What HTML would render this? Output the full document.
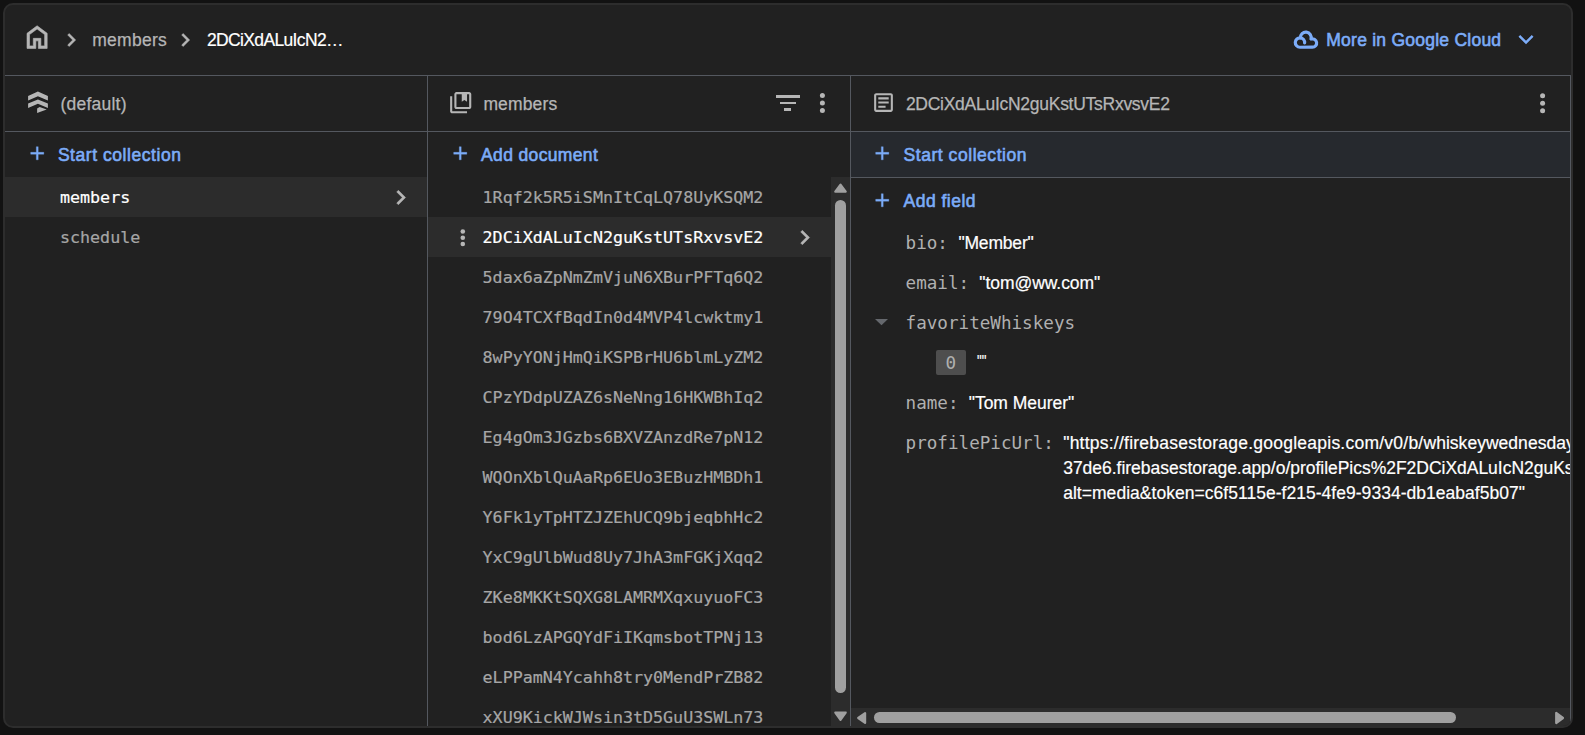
<!DOCTYPE html>
<html lang="en">
<head>
<meta charset="utf-8">
<title>Cloud Firestore</title>
<style>
*{box-sizing:border-box;margin:0;padding:0}
html,body{width:1585px;height:735px;overflow:hidden;background:#121212}
body{font-family:"Liberation Sans",sans-serif;color:#fff;position:relative}
.card{position:absolute;left:3px;top:3px;width:1570px;height:725px;background:#212121;border:2px solid #2d2d2d;border-radius:10px;overflow:hidden}
.wrap{position:absolute;left:-5px;top:-5px;width:1585px;height:735px}
.abs{position:absolute}
.hl{position:absolute;height:1px;background:#54585f}
.vl{position:absolute;width:1px;background:#54585f}
.t{position:absolute;white-space:nowrap;line-height:20px;font-size:17.5px}
.mono{font-family:"DejaVu Sans Mono","Liberation Mono",monospace;font-size:16.7px;letter-spacing:-0.02px}
.fld{font-family:"DejaVu Sans Mono","Liberation Mono",monospace;font-size:17.6px;color:#b0b0b0}
.hdr{color:#b6b6b6;-webkit-text-stroke:0.25px #b6b6b6}
.act{color:#7cacf8;-webkit-text-stroke:0.6px #7cacf8}
.doc{color:#a6a6a6;left:482.6px;-webkit-text-stroke:0.2px #a6a6a6}
.val{color:#fff;-webkit-text-stroke:0.2px #fff}
svg{position:absolute;overflow:visible}
</style>
</head>
<body>
<div class="card">
<div class="wrap">
<div class="hl" style="left:5px;top:75px;width:1566px"></div>
<div class="hl" style="left:5px;top:131px;width:1566px"></div>
<div class="vl" style="left:427px;top:76px;height:652px"></div>
<div class="vl" style="left:850px;top:76px;height:652px"></div>
<div class="vl" style="left:1570px;top:76px;height:652px"></div>
<svg style="left:22.45px;top:21.85px" width="30.2" height="30.2" viewBox="0 -960 960 960"><path fill="#b6b6b6" stroke="#b6b6b6" stroke-width="20" stroke-linejoin="miter" d="M240-200h120v-240h240v240h120v-360L480-740 240-560v360Zm-80 80v-480l320-240 320 240v480H520v-240h-80v240H160Z"/></svg>
<svg style="left:59.25px;top:27.45px" width="26" height="26" viewBox="0 -960 960 960"><path fill="#b6b6b6" stroke="#b6b6b6" stroke-width="18" stroke-linejoin="miter" d="M504-480 320-664l56-56 240 240-240 240-56-56 184-184Z"/></svg>
<svg style="left:173.10px;top:27.45px" width="26" height="26" viewBox="0 -960 960 960"><path fill="#b6b6b6" stroke="#b6b6b6" stroke-width="18" stroke-linejoin="miter" d="M504-480 320-664l56-56 240 240-240 240-56-56 184-184Z"/></svg>
<div class="t hdr" style="left:92.2px;top:30px;letter-spacing:0.28px">members</div>
<div class="t val" style="left:207px;top:30px;letter-spacing:-0.65px">2DCiXdALuIcN2…</div>
<svg style="left:1285px;top:20px" width="64" height="36"><g fill="none" stroke="#7cacf8" stroke-width="3.2" stroke-linejoin="round" stroke-linecap="round">
<path d="M14.94 27.23 A4.7 4.7 0 1 1 15.42 17.85 A5.4 5.4 0 1 1 25.97 19.08 A4.2 4.2 0 1 1 27.42 27.22 Z"/>
<path d="M15.42 17.85 A4.7 4.7 0 0 1 19.62 22.94"/></g>
</svg>
<div class="t act" style="left:1326.3px;top:30px;letter-spacing:0.24px">More in Google Cloud</div>
<svg style="left:1511.20px;top:24.90px" width="30" height="30" viewBox="0 -960 960 960"><path fill="#7cacf8" stroke="#7cacf8" stroke-width="0" stroke-linejoin="miter" d="M480-344 240-584l56-56 184 184 184-184 56 56-240 240Z"/></svg>
<svg style="left:0;top:0" width="60" height="120"><g fill="#b6b6b6">
<polygon points="37.9,91.6 47.9,96.0 47.9,100.6 37.9,96.2 28.1,100.6 28.1,96.0"/>
<polygon points="37.9,99.4 47.9,103.6 47.9,108.0 37.9,103.8 28.1,108.0 28.1,103.6"/>
<polygon points="37.1,108.5 39.6,107.0 46.7,109.5 37.1,113.1"/></g></svg>
<div class="t hdr" style="left:60.5px;top:94.4px;letter-spacing:0.22px">(default)</div>
<svg style="left:448.36px;top:89.66px" width="25.4" height="25.4" viewBox="0 -960 960 960"><path fill="#b6b6b6" stroke="#b6b6b6" stroke-width="0" stroke-linejoin="miter" d="M320-320h480v-480h-80v280l-100-60-100 60v-280H320v480Zm0 80q-33 0-56.500-23.500T240-320v-480q0-33 23.500-56.500T320-880h480q33 0 56.500 23.500T880-800v480q0 33-23.500 56.500T800-240H320ZM160-80q-33 0-56.500-23.500T80-160v-560h80v560h560v80H160Z"/></svg>
<div class="t hdr" style="left:483.4px;top:94.4px;letter-spacing:0.15px">members</div>
<div class="abs" style="left:775.6px;top:95px;width:24px;height:2.9px;background:#b6b6b6"></div>
<div class="abs" style="left:779.5px;top:101.6px;width:16.2px;height:2.8px;background:#b6b6b6"></div>
<div class="abs" style="left:784.4px;top:108px;width:6.4px;height:2.9px;background:#b6b6b6"></div>
<svg style="left:0;top:0" width="1585" height="300"><circle cx="822.4" cy="95.5" r="2.5" fill="#b6b6b6"/><circle cx="822.4" cy="103" r="2.5" fill="#b6b6b6"/><circle cx="822.4" cy="110.4" r="2.5" fill="#b6b6b6"/></svg>
<svg style="left:871.10px;top:89.90px" width="25" height="25" viewBox="0 0 24 24"><path fill="#b6b6b6" d="M19 5v14H5V5h14m0-2H5c-1.1 0-2 .9-2 2v14c0 1.1.9 2 2 2h14c1.1 0 2-.9 2-2V5c0-1.1-.9-2-2-2zM14 17H7v-2h7v2zm3-4H7v-2h10v2zm0-4H7V7h10v2z"/></svg>
<div class="t hdr" style="left:905.9px;top:94.4px;letter-spacing:-0.27px">2DCiXdALuIcN2guKstUTsRxvsvE2</div>
<svg style="left:0;top:0" width="1585" height="300"><circle cx="1542.6" cy="95.7" r="2.5" fill="#b6b6b6"/><circle cx="1542.6" cy="103.2" r="2.5" fill="#b6b6b6"/><circle cx="1542.6" cy="110.7" r="2.5" fill="#b6b6b6"/></svg>
<div class="abs" style="left:851px;top:132px;width:719px;height:45px;background:#26292e"></div>
<div class="hl" style="left:851px;top:177px;width:719px"></div>
<svg style="left:25.50px;top:142.30px" width="22.5" height="22.5" viewBox="0 -960 960 960"><path stroke="#7cacf8" stroke-width="14" fill="#7cacf8" stroke="#7cacf8" stroke-width="0" stroke-linejoin="miter" d="M440-440H200v-80h240v-240h80v240h240v80H520v240h-80v-240Z"/></svg>
<svg style="left:448.50px;top:142.30px" width="22.5" height="22.5" viewBox="0 -960 960 960"><path stroke="#7cacf8" stroke-width="14" fill="#7cacf8" stroke="#7cacf8" stroke-width="0" stroke-linejoin="miter" d="M440-440H200v-80h240v-240h80v240h240v80H520v240h-80v-240Z"/></svg>
<svg style="left:870.65px;top:142.30px" width="22.5" height="22.5" viewBox="0 -960 960 960"><path stroke="#7cacf8" stroke-width="14" fill="#7cacf8" stroke="#7cacf8" stroke-width="0" stroke-linejoin="miter" d="M440-440H200v-80h240v-240h80v240h240v80H520v240h-80v-240Z"/></svg>
<svg style="left:870.65px;top:188.60px" width="22.5" height="22.5" viewBox="0 -960 960 960"><path stroke="#7cacf8" stroke-width="14" fill="#7cacf8" stroke="#7cacf8" stroke-width="0" stroke-linejoin="miter" d="M440-440H200v-80h240v-240h80v240h240v80H520v240h-80v-240Z"/></svg>
<div class="t act" style="left:57.9px;top:144.6px;letter-spacing:0.55px">Start collection</div>
<div class="t act" style="left:481.1px;top:144.6px;letter-spacing:0.35px">Add document</div>
<div class="t act" style="left:903.5px;top:144.6px;letter-spacing:0.55px">Start collection</div>
<div class="t act" style="left:903.5px;top:190.9px;letter-spacing:0.5px">Add field</div>
<div class="abs" style="left:5px;top:177px;width:422px;height:40px;background:#2c2c2c"></div>
<div class="t mono" style="left:60px;top:187px;color:#fff;-webkit-text-stroke:0.2px #fff">members</div>
<svg style="left:386.80px;top:183.10px" width="29" height="29" viewBox="0 -960 960 960"><path fill="#b6b6b6" stroke="#b6b6b6" stroke-width="14" stroke-linejoin="miter" d="M504-480 320-664l56-56 240 240-240 240-56-56 184-184Z"/></svg>
<div class="t mono doc" style="left:60px;top:227px">schedule</div>
<div class="abs" style="left:428px;top:217px;width:403px;height:40px;background:#2c2c2c"></div>
<div class="t mono doc" style="top:187px">1Rqf2k5R5iSMnItCqLQ78UyKSQM2</div>
<div class="t mono doc" style="top:227px;color:#fff;-webkit-text-stroke:0.2px #fff">2DCiXdALuIcN2guKstUTsRxvsvE2</div>
<div class="t mono doc" style="top:267px">5dax6aZpNmZmVjuN6XBurPFTq6Q2</div>
<div class="t mono doc" style="top:307px">79O4TCXfBqdIn0d4MVP4lcwktmy1</div>
<div class="t mono doc" style="top:347px">8wPyYONjHmQiKSPBrHU6blmLyZM2</div>
<div class="t mono doc" style="top:387px">CPzYDdpUZAZ6sNeNng16HKWBhIq2</div>
<div class="t mono doc" style="top:427px">Eg4gOm3JGzbs6BXVZAnzdRe7pN12</div>
<div class="t mono doc" style="top:467px">WQOnXblQuAaRp6EUo3EBuzHMBDh1</div>
<div class="t mono doc" style="top:507px">Y6Fk1yTpHTZJZEhUCQ9bjeqbhHc2</div>
<div class="t mono doc" style="top:547px">YxC9gUlbWud8Uy7JhA3mFGKjXqq2</div>
<div class="t mono doc" style="top:587px">ZKe8MKKtSQXG8LAMRMXqxuyuoFC3</div>
<div class="t mono doc" style="top:627px">bod6LzAPGQYdFiIKqmsbotTPNj13</div>
<div class="t mono doc" style="top:667px">eLPPamN4Ycahh8try0MendPrZB82</div>
<div class="t mono doc" style="top:707px">xXU9KickWJWsin3tD5GuU3SWLn73</div>
<svg style="left:0;top:0" width="1585" height="300"><circle cx="462.8" cy="231.5" r="2.3" fill="#b6b6b6"/><circle cx="462.8" cy="237.8" r="2.3" fill="#b6b6b6"/><circle cx="462.8" cy="244.0" r="2.3" fill="#b6b6b6"/></svg>
<svg style="left:790.90px;top:222.70px" width="29" height="29" viewBox="0 -960 960 960"><path fill="#b6b6b6" stroke="#b6b6b6" stroke-width="14" stroke-linejoin="miter" d="M504-480 320-664l56-56 240 240-240 240-56-56 184-184Z"/></svg>
<div class="abs" style="left:831px;top:177px;width:19px;height:551px;background:#2c2c2c"></div>
<div class="vl" style="left:850px;top:177px;height:551px"></div>
<div class="abs" style="left:835px;top:200px;width:11px;height:493px;border-radius:5.5px;background:#a0a0a0"></div>
<div class="abs" style="left:851px;top:708px;width:719px;height:20px;background:#2c2c2c"></div>
<div class="abs" style="left:874px;top:712px;width:582px;height:11px;border-radius:5.5px;background:#a0a0a0"></div>
<svg style="left:0;top:0" width="1585" height="735"><g fill="#a0a0a0" stroke="#a0a0a0" stroke-width="2.2" stroke-linejoin="round"><polygon points="840.5,184.6 845.7,191.7 835.3,191.7"/><polygon points="840.5,719.8 845.7,712.5 835.3,712.5"/><polygon points="858.2,718 865.1,713.1 865.1,722.9"/><polygon points="1563.0,718 1556.2,712.9 1556.2,723.1"/></g></svg>
<div class="t fld" style="left:905.6px;top:232.7px">bio:</div>
<div class="t val" style="left:958.4px;top:232.7px;letter-spacing:-0.17px">"Member"</div>
<div class="t fld" style="left:905.6px;top:272.7px">email:</div>
<div class="t val" style="left:979.3px;top:272.7px;letter-spacing:-0.06px">"tom@ww.com"</div>
<svg style="left:874.6px;top:319.4px" width="13" height="6.3" viewBox="0 0 13 6.3"><polygon points="0,0 13,0 6.5,6.3" fill="#65686d"/></svg>
<div class="t fld" style="left:905.6px;top:312.7px">favoriteWhiskeys</div>
<div class="abs" style="left:936px;top:350px;width:30px;height:24.5px;background:#4e4e4e;border-radius:2px"></div>
<div class="t fld" style="left:945.6px;top:352.7px">0</div>
<div class="t val" style="left:976.8px;top:352px;transform:scaleX(0.75);transform-origin:0 0">""</div>
<div class="t fld" style="left:905.6px;top:392.7px">name:</div>
<div class="t val" style="left:968.8px;top:392.7px;letter-spacing:-0.04px">"Tom Meurer"</div>
<div class="t fld" style="left:905.6px;top:432.7px">profilePicUrl:</div>
<div class="abs" style="left:1060px;top:425px;width:510px;height:85px;overflow:hidden"><div class="t val" style="left:3.2px;top:6.2px;line-height:25px"><span style="letter-spacing:0.237px">"https://firebasestorage.googleapis.com/v0/b/</span><span style="letter-spacing:0.03px">whiskeywednesday-</span></div><div class="t val" style="left:3.2px;top:31.2px;line-height:25px;letter-spacing:-0.023px">37de6.firebasestorage.app/o/profilePics%2F2DCiXdALuIcN2guKstUTsRxvsvE2?</div><div class="t val" style="left:3.2px;top:56.2px;line-height:25px;letter-spacing:0.03px">alt=media&amp;token=c6f5115e-f215-4fe9-9334-db1eabaf5b07"</div></div>
</div>
</div>
</body>
</html>
